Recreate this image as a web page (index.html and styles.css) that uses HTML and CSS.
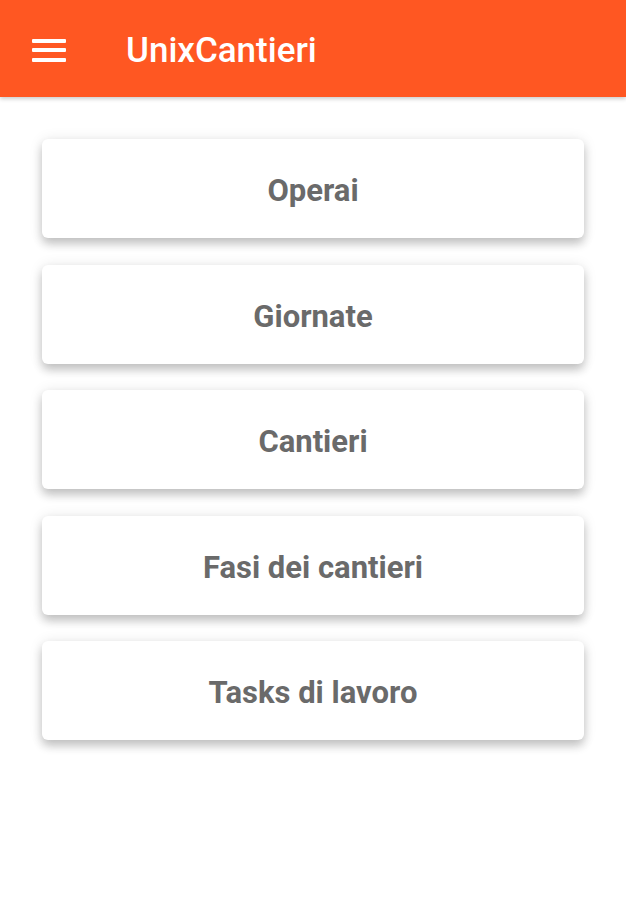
FILE: index.html
```html
<!DOCTYPE html>
<html lang="it">
<head>
    <meta charset="UTF-8">
    <meta name="viewport" content="width=device-width, initial-scale=1.0">
    <title>UnixCantieri</title>
    <link rel="stylesheet" href="styles.css">
</head>
<body>
    <header class="toolbar">
        <button class="menu-btn" aria-label="Menu">
            <span></span>
            <span></span>
            <span></span>
        </button>
        <h1 class="title">UnixCantieri</h1>
    </header>

    <main class="menu-list">
        <a class="menu-card" href="#">Operai</a>
        <a class="menu-card" href="#">Giornate</a>
        <a class="menu-card" href="#">Cantieri</a>
        <a class="menu-card" href="#">Fasi dei cantieri</a>
        <a class="menu-card" href="#">Tasks di lavoro</a>
    </main>
</body>
</html>
```

FILE: styles.css
```css
body {
    font-family: 'Roboto', 'Liberation Sans', sans-serif;
    background-color: #ffffff;
    margin: 0;
    padding: 0;
    min-height: 100vh;
}

.toolbar {
    background-color: #ff5722;
    height: 97px;
    display: flex;
    align-items: center;
    padding-left: 32px;
    box-shadow: 0 2px 4px rgba(0, 0, 0, 0.2);
}

.menu-btn {
    width: 34px;
    height: 23px;
    margin-top: 3px;
    padding: 0;
    border: none;
    background: none;
    display: flex;
    flex-direction: column;
    justify-content: space-between;
    cursor: pointer;
}

.menu-btn span {
    display: block;
    height: 4px;
    background-color: #fff;
    border-radius: 1px;
}

.title {
    margin: 3px 0 0 60px;
    color: white;
    font-size: 35px;
    font-weight: 500;
}

.menu-list {
    padding: 42px 42px 60px;
    display: flex;
    flex-direction: column;
    gap: 26.5px;
}

.menu-card {
    height: 99px;
    box-sizing: border-box;
    padding-top: 4px;
    display: flex;
    align-items: center;
    justify-content: center;
    background-color: white;
    border-radius: 6px;
    box-shadow: 0 6px 10px rgba(0, 0, 0, 0.2), 0 1px 14px rgba(0, 0, 0, 0.1);
    color: #6a6a6a;
    font-size: 31px;
    font-weight: bold;
    text-decoration: none;
}
```
